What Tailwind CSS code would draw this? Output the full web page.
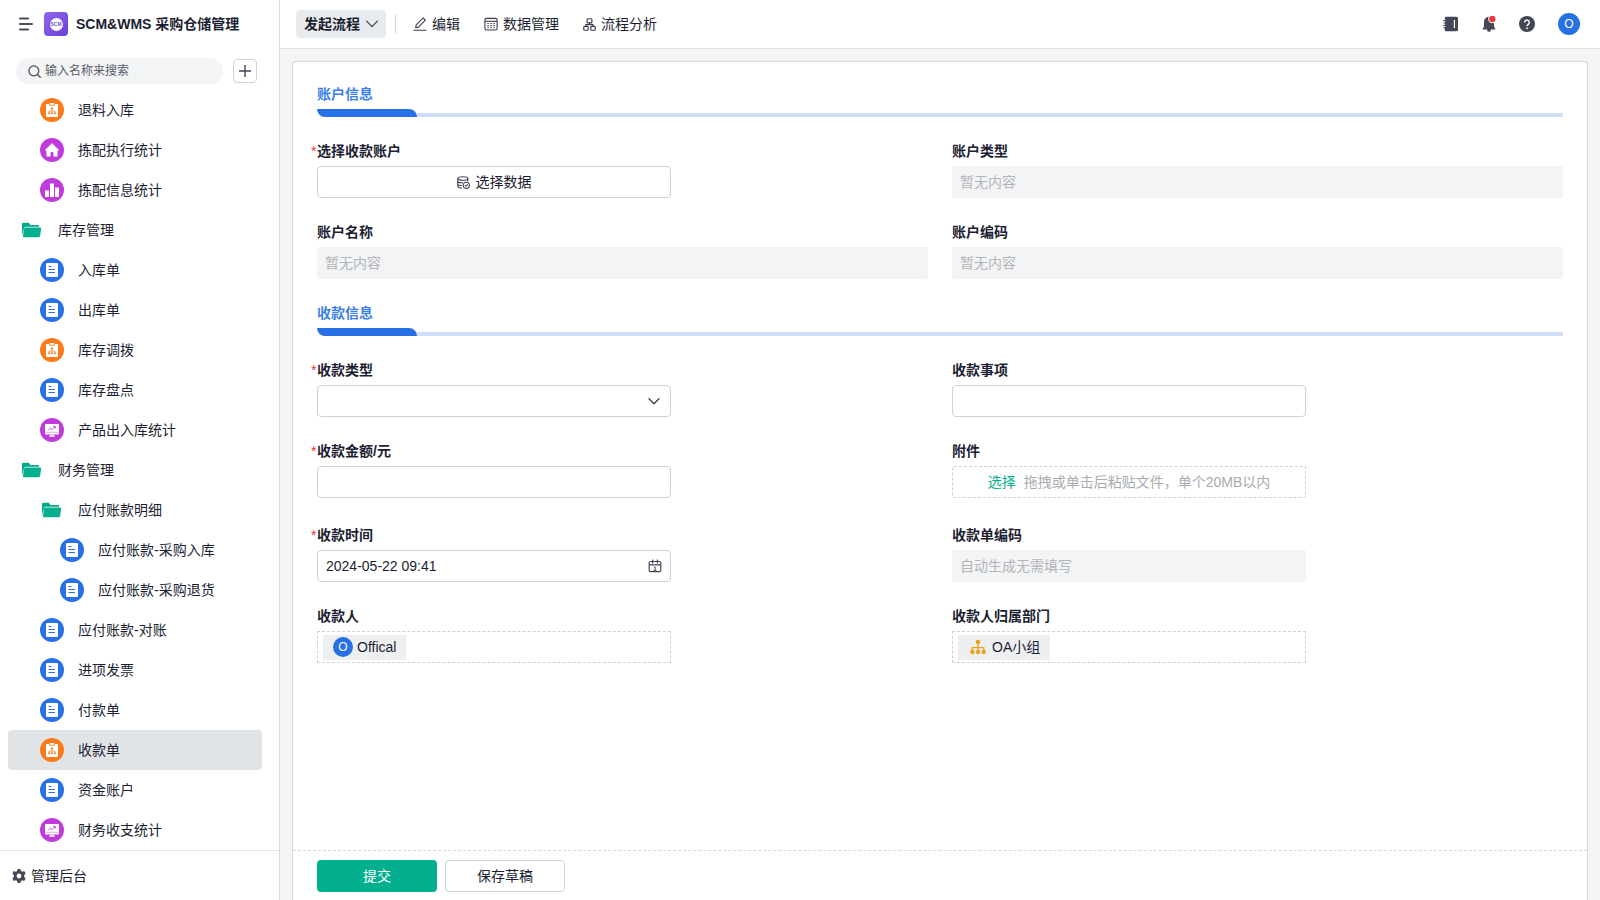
<!DOCTYPE html>
<html lang="zh-CN">
<head>
<meta charset="utf-8">
<meta name="viewport" content="width=device-width, initial-scale=1">
<title>SCM&amp;WMS 采购仓储管理</title>
<script src="https://cdn.jsdelivr.net/npm/@tailwindcss/browser@4"></script>
</head>
<body class="flex h-screen overflow-hidden bg-[#f2f4f5] font-['Liberation_Sans','Noto_Sans_CJK_SC',sans-serif] text-sm leading-5 text-[#1c1e32]">

<svg class="hidden" aria-hidden="true">
  <symbol id="doc" viewBox="0 0 24 24">
    <circle cx="12" cy="12" r="12" fill="#2770e5"/>
    <rect x="6" y="5" width="12" height="14" rx="1" fill="#fff"/>
    <path d="M8.500 8.500h3M8.500 11.500h6.500M8.500 14.500h6.500" stroke="#2770e5" stroke-width="1" fill="none"/>
  </symbol>
  <symbol id="flow" viewBox="0 0 24 24">
    <circle cx="12" cy="12" r="12" fill="#f97b1c"/>
    <path d="M7 6h2v1.400h6V6h2a1 1 0 0 1 1 1v11a1 1 0 0 1-1 1H7a1 1 0 0 1-1-1V7a1 1 0 0 1 1-1z" fill="#fff"/>
    <rect x="9.800" y="5" width="4.400" height="1.700" rx=".4" fill="#fff"/>
    <path d="M12 11v4M9 15v-2h6v2" stroke="#f97b1c" stroke-width=".7" fill="none"/>
    <circle cx="12" cy="10.500" r="1.100" fill="#f97b1c"/>
    <path d="M8.200 14.600h1.700v1.700H8.200zM11.200 14.600h1.700v1.700h-1.700zM14.100 14.600h1.700v1.700h-1.700z" fill="#f97b1c"/>
  </symbol>
  <symbol id="home" viewBox="0 0 24 24">
    <circle cx="12" cy="12" r="12" fill="#bf3bdb"/>
    <path d="M12 5.500 18.800 12.200h-1.600v6h-3.400v-3a1.800 1.800 0 0 0-3.600 0v3H6.800v-6H5.200z" fill="#fff" stroke="#fff" stroke-width=".7" stroke-linejoin="round"/>
  </symbol>
  <symbol id="bars" viewBox="0 0 24 24">
    <circle cx="12" cy="12" r="12" fill="#bf3bdb"/>
    <path d="M5 12.500h4V19H5zM10 5.500h4V19h-4zM15 9.500h4V19h-4z" fill="#fff"/>
  </symbol>
  <symbol id="board" viewBox="0 0 24 24">
    <circle cx="12" cy="12" r="12" fill="#bf3bdb"/>
    <rect x="5" y="6" width="14" height="10.500" rx="1" fill="#fff"/>
    <path d="M10.800 16.500h2.400v1h1.600v1.200H9.200v-1.200h1.600z" fill="#fff"/>
    <path d="m8.500 12 1.900-1.900 1.700 1.500 2.900-2.900M13.200 8.500h2.100v2.100" stroke="#bf3bdb" stroke-width=".9" fill="none"/>
    <path d="M5 14.300h14" stroke="#bf3bdb" stroke-opacity=".7" stroke-width=".6"/>
  </symbol>
  <symbol id="folder" viewBox="0 0 24 24">
    <path d="M2 17.500V6a1.200 1.200 0 0 1 1.200-1.200h5.500L10.500 7H18a1.200 1.200 0 0 1 1.200 1.200v.6H5.400a1.400 1.400 0 0 0-1.300 1z" fill="#02a986"/>
    <path d="M5.300 9.500h14.800a1 1 0 0 1 1 1.200l-1 7.400a1.300 1.300 0 0 1-1.300 1.100H4a1 1 0 0 1-1-1.200L4 10.600a1.300 1.300 0 0 1 1.300-1.100z" fill="#06b08f"/>
  </symbol>
</svg>

<aside class="flex w-[280px] shrink-0 flex-col border-r border-[#d8dbde] bg-white">
  <div class="flex h-12 shrink-0 items-center">
    <button type="button" class="ml-[19px]" aria-label="收起菜单">
      <svg class="h-[14px] w-[14px]" viewBox="0 0 14 14" fill="none" stroke="#4a4c5c" stroke-width="1.800" stroke-linecap="round"><path d="M.9 1.500h8.300M.9 7h12.200M.9 12.500h8.300"/></svg>
    </button>
    <span class="ml-[11px] flex h-6 w-6 items-center justify-center rounded-[4px] bg-linear-to-br from-[#9166ec] to-[#6a3fd9]">
      <span class="flex h-[13px] w-[13px] items-center justify-center rounded-full bg-white text-[5px] leading-none font-bold text-[#7b50e2]">SCM</span>
    </span>
    <h1 class="ml-2 font-bold">SCM&amp;WMS 采购仓储管理</h1>
  </div>
  <div class="flex h-[42px] shrink-0 items-center pt-1 pr-[22px] pl-4">
    <label class="flex h-[26px] flex-1 items-center gap-1 rounded-full bg-[#f2f4f5] pl-3">
      <svg class="h-[13px] w-[13px] shrink-0" viewBox="0 0 14 14" fill="none" stroke="#454757" stroke-width="1.300" stroke-linecap="round"><circle cx="6.300" cy="6.300" r="5.300"/><path d="m10.200 10.200 3 3"/></svg>
      <input type="text" aria-label="搜索" placeholder="输入名称来搜索" class="w-full min-w-0 bg-transparent text-xs outline-none placeholder:text-[#5a5c6b]">
    </label>
    <button type="button" aria-label="新增" class="ml-[10px] flex h-6 w-6 items-center justify-center rounded-[4px] border border-[#d0d3d6]">
      <svg class="h-3 w-3" viewBox="0 0 12 12" fill="none" stroke="#454757" stroke-width="1.400"><path d="M6 0v12M0 6h12"/></svg>
    </button>
  </div>
  <nav class="min-h-0 flex-1 overflow-hidden pr-[17px] pl-2">
    <a href="#" class="flex h-10 items-center gap-[14px] rounded-[4px] pl-8"><svg class="h-6 w-6"><use href="#flow"/></svg>退料入库</a>
    <a href="#" class="flex h-10 items-center gap-[14px] rounded-[4px] pl-8"><svg class="h-6 w-6"><use href="#home"/></svg>拣配执行统计</a>
    <a href="#" class="flex h-10 items-center gap-[14px] rounded-[4px] pl-8"><svg class="h-6 w-6"><use href="#bars"/></svg>拣配信息统计</a>
    <a href="#" class="flex h-10 items-center gap-[14px] rounded-[4px] pl-3"><svg class="h-6 w-6"><use href="#folder"/></svg>库存管理</a>
    <a href="#" class="flex h-10 items-center gap-[14px] rounded-[4px] pl-8"><svg class="h-6 w-6"><use href="#doc"/></svg>入库单</a>
    <a href="#" class="flex h-10 items-center gap-[14px] rounded-[4px] pl-8"><svg class="h-6 w-6"><use href="#doc"/></svg>出库单</a>
    <a href="#" class="flex h-10 items-center gap-[14px] rounded-[4px] pl-8"><svg class="h-6 w-6"><use href="#flow"/></svg>库存调拨</a>
    <a href="#" class="flex h-10 items-center gap-[14px] rounded-[4px] pl-8"><svg class="h-6 w-6"><use href="#doc"/></svg>库存盘点</a>
    <a href="#" class="flex h-10 items-center gap-[14px] rounded-[4px] pl-8"><svg class="h-6 w-6"><use href="#board"/></svg>产品出入库统计</a>
    <a href="#" class="flex h-10 items-center gap-[14px] rounded-[4px] pl-3"><svg class="h-6 w-6"><use href="#folder"/></svg>财务管理</a>
    <a href="#" class="flex h-10 items-center gap-[14px] rounded-[4px] pl-8"><svg class="h-6 w-6"><use href="#folder"/></svg>应付账款明细</a>
    <a href="#" class="flex h-10 items-center gap-[14px] rounded-[4px] pl-13"><svg class="h-6 w-6"><use href="#doc"/></svg>应付账款-采购入库</a>
    <a href="#" class="flex h-10 items-center gap-[14px] rounded-[4px] pl-13"><svg class="h-6 w-6"><use href="#doc"/></svg>应付账款-采购退货</a>
    <a href="#" class="flex h-10 items-center gap-[14px] rounded-[4px] pl-8"><svg class="h-6 w-6"><use href="#doc"/></svg>应付账款-对账</a>
    <a href="#" class="flex h-10 items-center gap-[14px] rounded-[4px] pl-8"><svg class="h-6 w-6"><use href="#doc"/></svg>进项发票</a>
    <a href="#" class="flex h-10 items-center gap-[14px] rounded-[4px] pl-8"><svg class="h-6 w-6"><use href="#doc"/></svg>付款单</a>
    <a href="#" aria-current="page" class="flex h-10 items-center gap-[14px] rounded-[4px] bg-[#e1e4e6] pl-8"><svg class="h-6 w-6"><use href="#flow"/></svg>收款单</a>
    <a href="#" class="flex h-10 items-center gap-[14px] rounded-[4px] pl-8"><svg class="h-6 w-6"><use href="#doc"/></svg>资金账户</a>
    <a href="#" class="flex h-10 items-center gap-[14px] rounded-[4px] pl-8"><svg class="h-6 w-6"><use href="#board"/></svg>财务收支统计</a>
  </nav>
  <a href="#" class="flex h-[50px] shrink-0 items-center gap-[5px] border-t border-[#e1e3e5] pl-3">
    <svg class="h-[14px] w-[14px]" viewBox="0 0 14 14" fill="#454757"><path fill-rule="evenodd" d="M5.600 0h2.800l.5 1.900 1.400.8 1.900-.6 1.400 2.500L12.200 6v2l1.400 1.400-1.400 2.500-1.900-.6-1.400.8-.5 1.900H5.600l-.5-1.900-1.400-.8-1.900.6L.4 9.400 1.800 8V6L.4 4.600l1.400-2.500 1.900.6 1.400-.8zM7 4.600a2.400 2.400 0 1 0 0 4.800 2.400 2.400 0 0 0 0-4.800z"/></svg>
    管理后台
  </a>
</aside>

<main class="flex min-w-0 flex-1 flex-col">
  <header class="flex h-[49px] shrink-0 items-center border-b border-[#dfe2e4] bg-white pr-5 pl-4">
    <button type="button" class="flex h-7 items-center gap-[6px] rounded-[4px] bg-[#e8ebed] px-2 font-semibold">发起流程
      <svg class="h-3 w-3" viewBox="0 0 12 12" fill="none" stroke="#3c3e4e" stroke-width="1.200" stroke-linecap="round" stroke-linejoin="round"><path d="m.6 3.200 5.400 5.400 5.400-5.400"/></svg>
    </button>
    <span class="ml-[9px] h-5 w-px bg-[#d5d8db]"></span>
    <div class="ml-[17px] flex items-center gap-6">
      <a href="#" class="flex items-center gap-[5px]">
        <svg class="h-[14px] w-[14px]" viewBox="0 0 14 14" fill="none" stroke="#3c3e4e" stroke-width="1.100" stroke-linejoin="round" stroke-linecap="round"><path d="M1 13.200h12M2.700 10.800l.5-2.900 7-7 2.200 2.200-7 7z"/></svg>编辑</a>
      <a href="#" class="flex items-center gap-[5px]">
        <svg class="h-[14px] w-[14px]" viewBox="0 0 14 14" fill="none" stroke="#3c3e4e" stroke-width="1.100"><rect x=".9" y="1.400" width="12.200" height="11.600" rx="1.500"/><path d="M.9 4.300h12.200"/><path d="M3.300 6.500h7.800M3.300 8.600h7.800M3.300 10.700h7.800" stroke-dasharray="1.500 1.500"/></svg>数据管理</a>
      <a href="#" class="flex items-center gap-[5px]">
        <svg class="h-[13px] w-[13px]" viewBox="0 0 14 14" fill="none" stroke="#3c3e4e" stroke-width="1.300"><rect x="4.400" y=".8" width="5.200" height="4.400" rx="1"/><rect x=".8" y="9" width="4.800" height="4.200" rx="1"/><rect x="8.400" y="9" width="4.800" height="4.200" rx="1"/><path d="M7 5.200v1.900M3.200 9V7.100h7.600V9"/></svg>流程分析</a>
    </div>
    <div class="ml-auto flex items-center">
      <button type="button" aria-label="通讯录">
        <svg class="h-4 w-4" viewBox="0 0 16 16"><path d="M3 .8h10.500A1.500 1.500 0 0 1 15 2.300v11.400a1.500 1.500 0 0 1-1.500 1.500H3A1.300 1.300 0 0 1 1.700 13.900V2.100A1.300 1.300 0 0 1 3 .8z" fill="#454757"/><path d="M.4 4.600h2.800M.4 7h2.800M.4 9.400h2.800M.4 11.800h2.800" stroke="#454757" stroke-width="1.100"/><path d="M.4 3.400h2M.4 5.800h2M.4 8.200h2M.4 10.600h2" stroke="#fff" stroke-width=".8"/><path d="M11.400 4v8" stroke="#fff" stroke-width="1.300"/></svg>
      </button>
      <button type="button" aria-label="通知" class="ml-[22px]">
        <svg class="h-4 w-4" viewBox="0 0 16 16"><path d="M8 .8a5 5 0 0 1 5 5v5l1.300 2v.6H1.700v-.6l1.300-2v-5a5 5 0 0 1 5-5zM6.200 13.400h3.600v1a1.800 1.300 0 0 1-3.600 0z" fill="#454757"/><circle cx="11.300" cy="3" r="4.200" fill="#fff"/><circle cx="11.300" cy="3" r="3.200" fill="#e33b3b"/></svg>
      </button>
      <button type="button" aria-label="帮助" class="ml-[22px]">
        <svg class="h-4 w-4" viewBox="0 0 16 16"><circle cx="8" cy="8" r="8" fill="#454757"/><path d="M5.700 6.400a2.300 2.300 0 1 1 3.600 1.900C8.500 8.800 8 9.200 8 10.200" fill="none" stroke="#fff" stroke-width="1.400"/><circle cx="8" cy="12.300" r=".9" fill="#fff"/></svg>
      </button>
      <button type="button" aria-label="个人中心" class="ml-[23px] flex h-[22px] w-[22px] items-center justify-center rounded-full bg-[#2770e5] text-xs text-white">O</button>
    </div>
  </header>

  <form class="mx-3 mt-3 flex min-h-0 flex-1 flex-col rounded-t-[4px] border border-b-0 border-[#d6d9dc] bg-white">
    <div class="flex min-h-0 flex-1 flex-col gap-6 overflow-hidden px-6 pt-[22px]">
      <div>
        <h2 class="mb-[5px] font-semibold text-[#3c7fe8]">账户信息</h2>
        <div class="flex h-2 items-end"><span class="h-2 w-[100px] rounded-tr-lg rounded-bl-lg bg-[#2770e5]"></span><span class="h-1 flex-1 bg-[#cfdff7]"></span></div>
      </div>
      <div class="grid grid-cols-2 gap-6">
        <div>
          <label for="account" class="relative mb-[5px] block font-semibold"><span class="absolute -left-[6px] font-normal text-[#e33b3b]">*</span>选择收款账户</label>
          <button id="account" type="button" class="flex h-8 w-[354px] max-w-full items-center justify-center gap-[6px] rounded-[4px] border border-[#ced2d5]">
            <svg class="h-[13px] w-[13px]" viewBox="0 0 13 13" fill="none" stroke="#3c3e4e" stroke-width="1.100"><ellipse cx="5.800" cy="2.500" rx="5" ry="1.800"/><path d="M.8 2.500v7.800c0 1 1.800 1.800 4.400 1.900M10.800 2.500v2.800M.8 5.200c0 1 2 1.700 5 1.700M.8 7.900c0 1 1.900 1.500 4 1.600"/><circle cx="9.300" cy="9.300" r="3.100"/><path d="m8 9.300 1 1 1.700-1.900"/></svg>选择数据</button>
        </div>
        <div>
          <label for="type" class="mb-[5px] block font-semibold">账户类型</label>
          <input id="type" type="text" disabled placeholder="暂无内容" class="block h-8 w-full rounded-[2px] bg-[#f2f4f5] px-2 placeholder:text-[#b3b5b9]">
        </div>
        <div>
          <label for="name" class="mb-[5px] block font-semibold">账户名称</label>
          <input id="name" type="text" disabled placeholder="暂无内容" class="block h-8 w-full rounded-[2px] bg-[#f2f4f5] px-2 placeholder:text-[#b3b5b9]">
        </div>
        <div>
          <label for="code" class="mb-[5px] block font-semibold">账户编码</label>
          <input id="code" type="text" disabled placeholder="暂无内容" class="block h-8 w-full rounded-[2px] bg-[#f2f4f5] px-2 placeholder:text-[#b3b5b9]">
        </div>
      </div>
      <div>
        <h2 class="mb-[5px] font-semibold text-[#3c7fe8]">收款信息</h2>
        <div class="flex h-2 items-end"><span class="h-2 w-[100px] rounded-tr-lg rounded-bl-lg bg-[#2770e5]"></span><span class="h-1 flex-1 bg-[#cfdff7]"></span></div>
      </div>
      <div class="grid grid-cols-2 gap-6">
        <div>
          <label for="kind" class="relative mb-[5px] block font-semibold"><span class="absolute -left-[6px] font-normal text-[#e33b3b]">*</span>收款类型</label>
          <div class="relative w-[354px] max-w-full">
            <select id="kind" class="block h-8 w-full appearance-none rounded-[4px] border border-[#ced2d5] bg-white px-2"><option></option></select>
            <svg class="pointer-events-none absolute top-[10px] right-[11px] h-3 w-3" viewBox="0 0 12 12" fill="none" stroke="#3c3e4e" stroke-width="1.300" stroke-linecap="round" stroke-linejoin="round"><path d="m1 3.800 5 5 5-5"/></svg>
          </div>
        </div>
        <div>
          <label for="matter" class="mb-[5px] block font-semibold">收款事项</label>
          <input id="matter" type="text" class="block h-8 w-[354px] max-w-full rounded-[4px] border border-[#ced2d5] px-2">
        </div>
        <div>
          <label for="amount" class="relative mb-[5px] block font-semibold"><span class="absolute -left-[6px] font-normal text-[#e33b3b]">*</span>收款金额/元</label>
          <input id="amount" type="text" class="block h-8 w-[354px] max-w-full rounded-[4px] border border-[#ced2d5] px-2">
        </div>
        <div class="pb-[3px]">
          <label for="attach" class="mb-[5px] block font-semibold">附件</label>
          <button id="attach" type="button" class="flex h-8 w-[354px] max-w-full items-center justify-center gap-2 rounded-[2px] border border-dashed border-[#ced2d5] whitespace-nowrap"><span class="text-[#06b08f]">选择</span><span class="text-[#a9abb0]">拖拽或单击后粘贴文件，单个20MB以内</span></button>
        </div>
        <div>
          <label for="time" class="relative mb-[5px] block font-semibold"><span class="absolute -left-[6px] font-normal text-[#e33b3b]">*</span>收款时间</label>
          <div class="flex h-8 w-[354px] max-w-full items-center rounded-[4px] border border-[#ced2d5] px-2">
            <input id="time" type="text" value="2024-05-22 09:41" class="min-w-0 flex-1 bg-transparent outline-none">
            <svg class="h-[14px] w-[14px]" viewBox="0 0 14 14" fill="none" stroke="#454757" stroke-width="1.200"><rect x="1.200" y="2.500" width="11.600" height="10.200" rx="1.200"/><path d="M1.200 5.800h11.600M4.600.6v4M9.400.6v4"/><path d="M6 8h1.200v3.300M5.500 11.300h3.200" stroke-width=".9"/></svg>
          </div>
        </div>
        <div>
          <label for="serial" class="mb-[5px] block font-semibold">收款单编码</label>
          <input id="serial" type="text" disabled placeholder="自动生成无需填写" class="block h-8 w-[354px] max-w-full rounded-[2px] bg-[#f2f4f5] px-2 placeholder:text-[#b3b5b9]">
        </div>
        <div>
          <h3 class="mb-[5px] font-semibold">收款人</h3>
          <div class="flex h-8 w-[354px] max-w-full items-center border border-dashed border-[#ced2d5] pl-[5px]">
            <span class="flex h-[25px] items-center gap-1 bg-[#eeeff1] px-[10px]"><span class="flex h-5 w-5 items-center justify-center rounded-full bg-[#2770e5] text-xs text-white">O</span>Offical</span>
          </div>
        </div>
        <div>
          <h3 class="mb-[5px] font-semibold">收款人归属部门</h3>
          <div class="flex h-8 w-[354px] max-w-full items-center border border-dashed border-[#ced2d5] pl-[5px]">
            <span class="flex h-[25px] items-center gap-[6px] bg-[#eeeff1] pr-[10px] pl-3"><svg class="h-4 w-4" viewBox="0 0 16 16" fill="#eba31c"><path d="M8 4v9M2.200 12V8.600h11.600V12" fill="none" stroke="#eba31c" stroke-width="1.400"/><circle cx="8" cy="3" r="2.300"/><circle cx="2.300" cy="13" r="2.200"/><circle cx="8" cy="13" r="2.200"/><circle cx="13.700" cy="13" r="2.200"/></svg>OA小组</span>
          </div>
        </div>
      </div>
    </div>
    <div class="flex h-[50px] shrink-0 items-center gap-2 border-t border-dashed border-[#d6d9dc] px-6">
      <button type="submit" class="h-8 w-[120px] rounded-[4px] bg-[#02b08f] text-white">提交</button>
      <button type="button" class="h-8 w-[120px] rounded-[4px] border border-[#ced2d5]">保存草稿</button>
    </div>
  </form>
</main>
</body>
</html>
